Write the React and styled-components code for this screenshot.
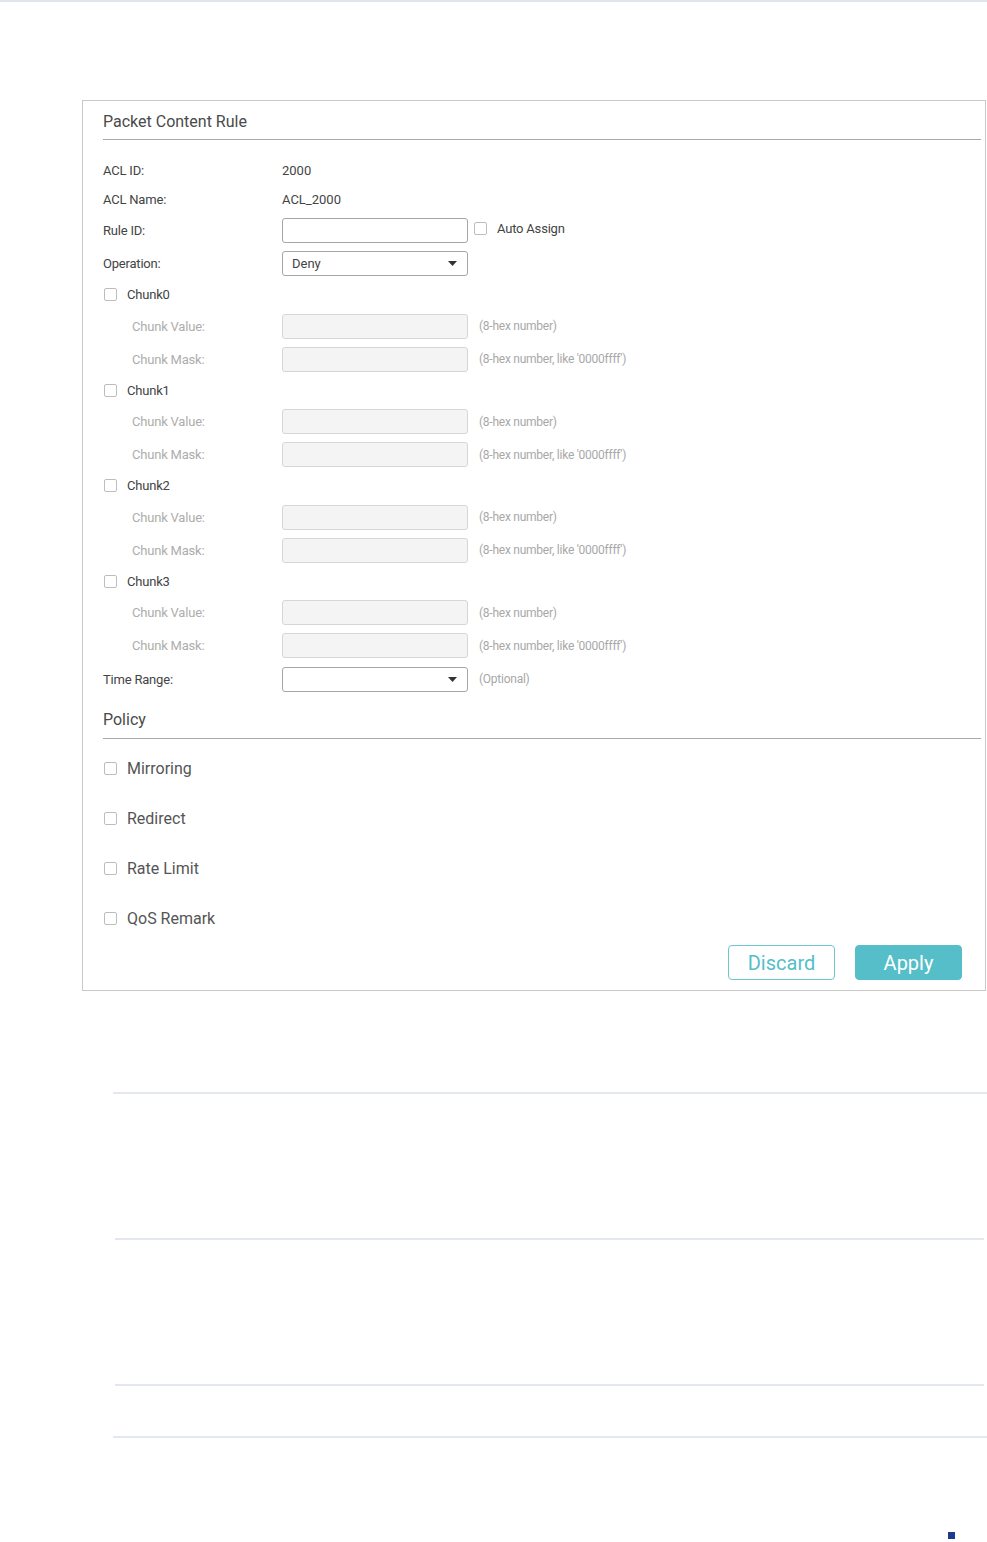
import React from "react";
import styled, { createGlobalStyle } from "styled-components";

const GlobalStyle = createGlobalStyle`
  html, body {
    margin: 0;
    padding: 0;
    background: #fff;
    font-family: Roboto, "Liberation Sans", Arial, sans-serif;
    color: #333;
  }
`;

const TopRule = styled.div`
  height: 2px;
  background: #e1e6ec;
`;

const Page = styled.div`
  padding: 98px 0 0 82px;
`;

const Panel = styled.div`
  width: 904px;
  box-sizing: border-box;
  border: 1px solid #c9c9c9;
  padding: 0 4px 10px 20px;
`;

const SectionHeader = styled.div`
  margin-top: ${(p) => p.$top}px;
  padding-bottom: ${(p) => p.$bottom}px;
  border-bottom: 1px solid #a9a9a9;
  font-size: 16px;
  line-height: 20px;
  color: #4a4a4a;
`;

const Form = styled.div`
  margin-top: 16px;
`;

const PolicyList = styled.div`
  margin-top: 4px;
`;

const Row = styled.div`
  display: flex;
  align-items: center;
  height: ${(p) => p.$h}px;
`;

const Label = styled.div`
  width: ${(p) => (p.$sub ? 150 : 179)}px;
  padding-left: ${(p) => (p.$sub ? 29 : 0)}px;
  font-size: 13px;
  letter-spacing: -0.2px;
  color: ${(p) => (p.$sub ? "#adadad" : "#444")};
  flex-shrink: 0;
`;

const Value = styled.div`
  font-size: 13px;
  color: #444;
`;

const Box = styled.span`
  display: inline-block;
  width: 13px;
  height: 13px;
  box-sizing: border-box;
  border: 1px solid #bdbdbd;
  border-radius: 2px;
  background: #fff;
  margin-left: ${(p) => p.$ml ?? 1}px;
  margin-right: 10px;
  flex-shrink: 0;
`;

const CheckText = styled.span`
  font-size: ${(p) => (p.$big ? 16 : 13)}px;
  color: ${(p) => (p.$big ? "#555" : "#444")};
  letter-spacing: ${(p) => (p.$big ? 0 : -0.2)}px;
`;

const AutoAssign = styled.div`
  display: flex;
  align-items: center;
  margin-bottom: 4px;
`;

const TextInput = styled.div`
  width: 186px;
  height: 25px;
  box-sizing: border-box;
  border: 1px solid ${(p) => (p.$disabled ? "#d6d6d6" : "#a6a6a6")};
  background: ${(p) => (p.$disabled ? "#f4f4f4" : "#fff")};
  border-radius: 3px;
  flex-shrink: 0;
`;

const Select = styled.div`
  width: 186px;
  height: 25px;
  box-sizing: border-box;
  border: 1px solid #a6a6a6;
  border-radius: 3px;
  display: flex;
  align-items: center;
  justify-content: space-between;
  padding: 0 10px 0 9px;
  font-size: 13px;
  color: #444;
  flex-shrink: 0;
`;

const Hint = styled.span`
  margin-left: 11px;
  font-size: 12px;
  letter-spacing: -0.25px;
  color: #a8a8a8;
`;

const ButtonRow = styled.div`
  display: flex;
  justify-content: flex-end;
  gap: 20px;
  margin: 2px 19px 0 0;
`;

const Button = styled.div`
  width: 107px;
  height: 35px;
  box-sizing: border-box;
  border-radius: 4px;
  border: 1px solid ${(p) => (p.$primary ? "#55bec8" : "#6ec7cf")};
  background: ${(p) => (p.$primary ? "#55bec8" : "#fff")};
  color: ${(p) => (p.$primary ? "#fff" : "#55bec8")};
  font-size: 20px;
  display: flex;
  align-items: center;
  justify-content: center;
`;

const Divider = styled.div`
  height: 2px;
  background: #e3e8ee;
  margin: ${(p) => p.$top}px ${(p) => p.$right}px 0 ${(p) => p.$left}px;
`;

const Marker = styled.div`
  width: 7px;
  height: 7px;
  background: #1b3c8b;
  margin: 94px 0 0 866px;
`;

const Arrow = () => (
  <svg width="9" height="5" viewBox="0 0 9 5">
    <path d="M0 0h9L4.5 5z" fill="#333" />
  </svg>
);

const chunks = ["Chunk0", "Chunk1", "Chunk2", "Chunk3"];
const policies = ["Mirroring", "Redirect", "Rate Limit", "QoS Remark"];

export default function App() {
  return (
    <>
      <GlobalStyle />
      <TopRule />
      <Page>
        <Panel>
          <SectionHeader $top={11} $bottom={7}>
            Packet Content Rule
          </SectionHeader>
          <Form>
            <Row $h={29}>
              <Label>ACL ID:</Label>
              <Value>2000</Value>
            </Row>
            <Row $h={29}>
              <Label>ACL Name:</Label>
              <Value>ACL_2000</Value>
            </Row>
            <Row $h={33}>
              <Label>Rule ID:</Label>
              <TextInput />
              <AutoAssign>
                <Box $ml={6} />
                <CheckText>Auto Assign</CheckText>
              </AutoAssign>
            </Row>
            <Row $h={33}>
              <Label>Operation:</Label>
              <Select>
                Deny
                <Arrow />
              </Select>
            </Row>
            {chunks.map((c) => (
              <React.Fragment key={c}>
                <Row $h={29.5}>
                  <Box />
                  <CheckText>{c}</CheckText>
                </Row>
                <Row $h={33}>
                  <Label $sub>Chunk Value:</Label>
                  <TextInput $disabled />
                  <Hint>(8-hex number)</Hint>
                </Row>
                <Row $h={33}>
                  <Label $sub>Chunk Mask:</Label>
                  <TextInput $disabled />
                  <Hint>(8-hex number, like '0000ffff')</Hint>
                </Row>
              </React.Fragment>
            ))}
            <Row $h={34}>
              <Label>Time Range:</Label>
              <Select>
                <span />
                <Arrow />
              </Select>
              <Hint>(Optional)</Hint>
            </Row>
          </Form>
          <SectionHeader $top={14} $bottom={8}>
            Policy
          </SectionHeader>
          <PolicyList>
            {policies.map((p) => (
              <Row $h={50} key={p}>
                <Box />
                <CheckText $big>{p}</CheckText>
              </Row>
            ))}
          </PolicyList>
          <ButtonRow>
            <Button>Discard</Button>
            <Button $primary>Apply</Button>
          </ButtonRow>
        </Panel>
        <Divider $top={101} $left={31} $right={0} />
        <Divider $top={144} $left={33} $right={3} />
        <Divider $top={144} $left={33} $right={3} />
        <Divider $top={50} $left={31} $right={0} />
        <Marker />
      </Page>
    </>
  );
}
